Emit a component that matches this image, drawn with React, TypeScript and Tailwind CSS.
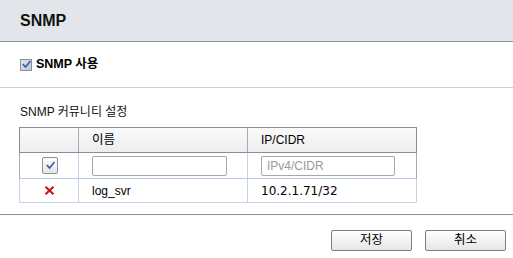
import React from "react";

const font = "font-['Liberation_Sans','Noto_Sans_CJK_KR',sans-serif]";

function CheckMark({ className }: { className?: string }) {
  return (
    <svg viewBox="0 0 10 10" className={className}>
      <path d="M1.5 5.2 L4 7.8 L8.8 1.8" fill="none" stroke="#3a5ba8" strokeWidth="1.8" strokeLinecap="square" />
    </svg>
  );
}

export default function App() {
  return (
    <div className={`w-[513px] h-[258px] bg-white text-black ${font}`}>
      {/* Header */}
      <div className="h-[42px] bg-[#e2e5ea] border-b border-[#8f9296] pl-5 flex items-center">
        <span className="text-[16px] font-bold leading-none text-[#111]">SNMP</span>
      </div>

      {/* Enable */}
      <div className="h-[46px] border-b border-[#cfcfcf] pl-5 flex items-center gap-[4px]">
        <div className="w-[12px] h-[12px] border border-[#8e8f8f] bg-gradient-to-br from-[#dfe6f1] to-[#b9c6db] flex items-center justify-center">
          <CheckMark className="w-[9px] h-[9px]" />
        </div>
        <span className="text-[12.5px] font-bold leading-none">SNMP 사용</span>
      </div>

      {/* Community */}
      <div className="pl-[19px] pt-[17px]">
        <div className="pl-[1px] text-[12px] leading-[14px] text-[#111]">SNMP 커뮤니티 설정</div>
        <div className="mt-[8px] w-[398px] text-[12px]">
          {/* header row */}
          <div className="flex h-[26px] border border-[#8c8d90] bg-gradient-to-b from-[#fafafb] to-[#eceef0]">
            <div className="w-[59px] border-r border-[#a9abae]" />
            <div className="w-[169px] border-r border-[#a9abae] pl-[13px] flex items-center text-[12.5px]">이름</div>
            <div className="flex-1 pl-[13px] flex items-center">IP/CIDR</div>
          </div>
          {/* input row */}
          <div className="flex h-[26px] border-x border-b border-x-[#a9abae] border-b-[#b9c9e3]">
            <div className="w-[59px] border-r border-[#c6d3e8] flex items-center justify-center pl-[2px]">
              <div className="w-[16px] h-[17px] rounded-[2px] border border-[#8f9092] bg-gradient-to-b from-[#fdfdfd] to-[#e3e4e6] flex items-center justify-center">
                <CheckMark className="w-[9px] h-[9px]" />
              </div>
            </div>
            <div className="w-[169px] border-r border-[#c6d3e8] pl-[13px] flex items-center">
              <div className="w-[135px] h-[20px] border border-[#a7a7a7] rounded-[2px] bg-white" />
            </div>
            <div className="flex-1 pl-[13px] flex items-center">
              <div className="w-[134px] h-[20px] border border-[#a7a7a7] rounded-[2px] bg-white pl-[5px] flex items-center text-[#9a9a9a]">IPv4/CIDR</div>
            </div>
          </div>
          {/* data row */}
          <div className="flex h-[24px] border-x border-b border-[#c6d3e8]">
            <div className="w-[59px] border-r border-[#c6d3e8] flex items-center justify-center pl-[1px]">
              <svg viewBox="0 0 10 9" className="w-[11px] h-[9px]">
                <path d="M1 0.8 L9 8.2 M9 0.8 L1 8.2" stroke="#c8161d" strokeWidth="2.2" />
              </svg>
            </div>
            <div className="w-[169px] border-r border-[#c6d3e8] pl-[13px] flex items-center">log_svr</div>
            <div className="flex-1 pl-[13px] flex items-center font-['DejaVu_Sans',sans-serif] text-[12px]">10.2.1.71/32</div>
          </div>
        </div>
      </div>

      {/* Footer */}
      <div className="mt-[11px] border-t border-[#8f9296] pt-[15px] pr-[7px] flex justify-end gap-[13px]">
        <button className="w-[81px] h-[21px] rounded-[2px] border border-[#7d7e80] bg-gradient-to-b from-[#ffffff] to-[#e6e6e6] text-[12.5px] leading-none">저장</button>
        <button className="w-[81px] h-[21px] rounded-[2px] border border-[#7d7e80] bg-gradient-to-b from-[#ffffff] to-[#e6e6e6] text-[12.5px] leading-none">취소</button>
      </div>
    </div>
  );
}
